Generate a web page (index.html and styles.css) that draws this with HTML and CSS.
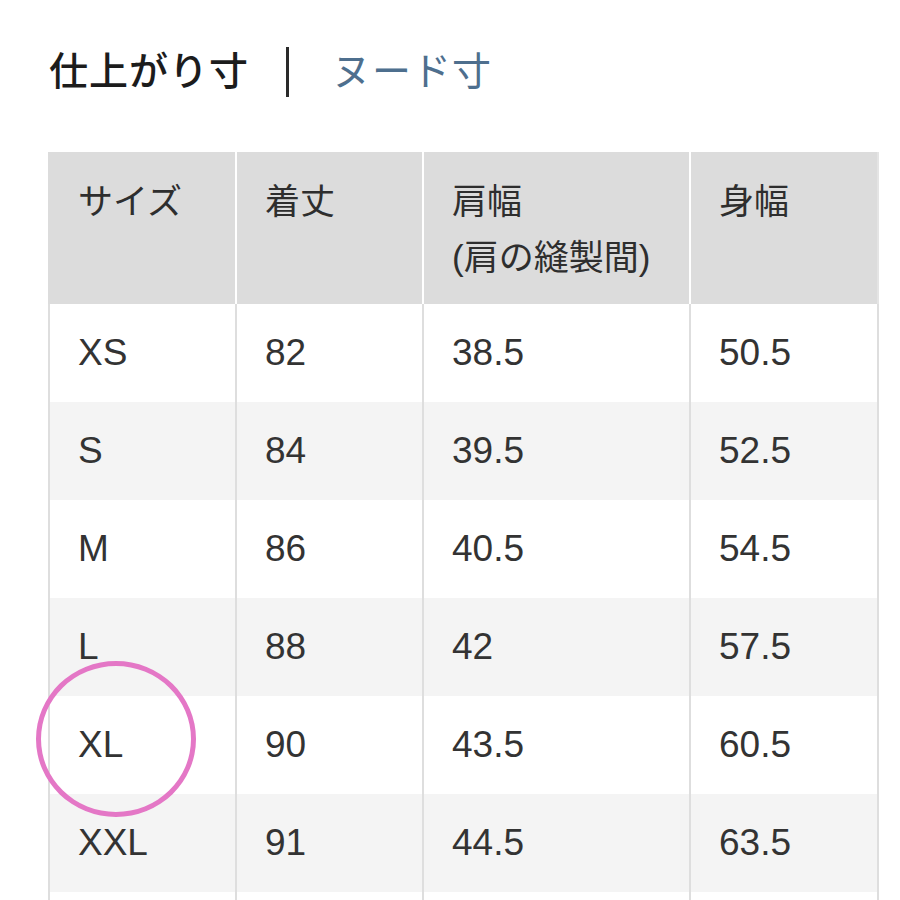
FILE: index.html
```html
<!DOCTYPE html>
<html lang="ja">
<head>
<meta charset="utf-8">
<link rel="stylesheet" href="styles.css">
</head>
<body>
<div class="page">
  <div class="tabs">
    <span class="tab active">仕上がり寸</span>
    <span class="sep"></span>
    <span class="tab link">ヌード寸</span>
  </div>
  <div class="table-wrap">
    <table class="size-table">
      <colgroup>
        <col class="c1"><col class="c2"><col class="c3"><col class="c4">
      </colgroup>
      <thead>
        <tr>
          <th>サイズ</th>
          <th>着丈</th>
          <th>肩幅<br>(肩の縫製間)</th>
          <th>身幅</th>
        </tr>
      </thead>
      <tbody>
        <tr><td>XS</td><td>82</td><td>38.5</td><td>50.5</td></tr>
        <tr class="alt"><td>S</td><td>84</td><td>39.5</td><td>52.5</td></tr>
        <tr><td>M</td><td>86</td><td>40.5</td><td>54.5</td></tr>
        <tr class="alt"><td>L</td><td>88</td><td>42</td><td>57.5</td></tr>
        <tr><td>XL</td><td>90</td><td>43.5</td><td>60.5</td></tr>
        <tr class="alt"><td>XXL</td><td>91</td><td>44.5</td><td>63.5</td></tr>
        <tr><td>&nbsp;</td><td></td><td></td><td></td></tr>
      </tbody>
    </table>
    <div class="circle"></div>
  </div>
</div>
</body>
</html>
```
FILE: styles.css
```css
html, body {
  margin: 0;
  padding: 0;
  background: #fff;
}
body {
  width: 900px;
  height: 900px;
  overflow: hidden;
  font-family: "Liberation Sans", "Noto Sans CJK JP", sans-serif;
  color: #333;
}
.page {
  padding-top: 46px;
}
.tabs {
  display: flex;
  align-items: center;
  height: 52px;
  padding-left: 49px;
}
.tab {
  font-size: 39px;
  line-height: 52px;
  letter-spacing: 1px;
}
.tab.active {
  color: #1c1c1c;
  font-weight: 500;
}
.sep {
  width: 3px;
  height: 50px;
  background: #2a2a2a;
  margin: 0 43px 0 37px;
}
.tab.link {
  color: #4e6f8e;
}
.table-wrap {
  position: relative;
  margin-top: 54px;
  margin-left: 48px;
  width: 831px;
}
.size-table {
  border-collapse: separate;
  border-spacing: 0;
  table-layout: fixed;
  width: 831px;
}
.c1 { width: 189px; }
.c2 { width: 187px; }
.c3 { width: 267px; }
.c4 { width: 188px; }
.size-table th {
  background: #dcdcdc;
  height: 152px;
  box-sizing: border-box;
  vertical-align: top;
  text-align: left;
  font-weight: 400;
  font-size: 35px;
  line-height: 56px;
  padding: 22px 0 0 28px;
  color: #2e2e2e;
  border-right: 2px solid #fff;
}
.size-table th:last-child {
  border-right: 2px solid #e4e4e4;
}
.size-table td {
  height: 98px;
  box-sizing: border-box;
  padding: 0 0 0 28px;
  font-size: 37px;
  color: #333;
  vertical-align: middle;
  border-right: 2px solid #dedede;
}
.size-table td:first-child {
  border-left: 2px solid #dedede;
}
.size-table th:first-child {
  padding-left: 30px;
}
.size-table tr.alt td {
  background: #f4f4f4;
}
.circle {
  position: absolute;
  left: -12px;
  top: 509px;
  width: 150px;
  height: 146px;
  border: 5px solid #e477c6;
  border-radius: 50%;
}
```
